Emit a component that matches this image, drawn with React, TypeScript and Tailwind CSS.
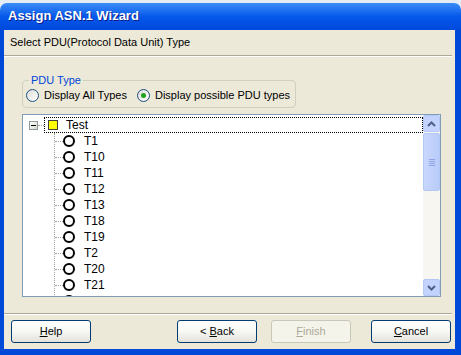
import { ReactNode } from 'react';

const font = { fontFamily: '"Liberation Sans", Arial, sans-serif' };

const items = ['T1', 'T10', 'T11', 'T12', 'T13', 'T18', 'T19', 'T2', 'T20', 'T21', 'T22'];

// XP push button
const XpButton = ({ children, disabled = false }: { children: ReactNode; disabled?: boolean }) => (
  <button
    className={`w-[80px] h-[23px] rounded-[3px] border text-[11px] flex items-center justify-center ${
      disabled
        ? 'border-[#c9c7ba] bg-[#f5f4ea] text-[#aca899]'
        : 'border-[#003c74] bg-gradient-to-b from-white via-[#f7f7f4] to-[#e3e2da] text-black'
    }`}
  >
    {children}
  </button>
);

const Radio = ({ checked, label }: { checked?: boolean; label: string }) => (
  <div className="flex items-center gap-[5px] whitespace-nowrap shrink-0">
    <div className="w-[13px] h-[13px] rounded-full border border-[#1c5180] bg-gradient-to-br from-[#dcdcd6] to-white flex items-center justify-center">
      {checked && <div className="w-[5px] h-[5px] rounded-full bg-[#21a121]" />}
    </div>
    <span>{label}</span>
  </div>
);

const ScrollArrow = ({ up }: { up?: boolean }) => (
  <div className="w-[17px] h-[17px] rounded-[2px] border border-[#b4c8f6] bg-[#c3d3fd] flex items-center justify-center">
    <svg width="9" height="6" viewBox="0 0 9 6">
      <path
        d={up ? 'M1 5 L4.5 1.5 L8 5' : 'M1 1 L4.5 4.5 L8 1'}
        stroke="#4d6185"
        strokeWidth="2"
        fill="none"
      />
    </svg>
  </div>
);

export default function App() {
  return (
    <div className="w-[461px] h-[355px] bg-[#e6ecf5] pt-[3px] flex flex-col text-black" style={font}>
      {/* Title bar */}
      <div className="h-[27px] rounded-t-[7px] bg-gradient-to-b from-[#3b8cf7] via-[#0558ea] to-[#0049dc] flex items-center pl-[8px] pb-[1px]">
        <span className="text-white font-bold text-[13px] [text-shadow:1px_1px_0_#0a1e8c]">Assign ASN.1 Wizard</span>
      </div>

      {/* Window frame + body */}
      <div className="flex-1 border-l-[4px] border-r-[6px] border-b-[6px] border-[#0048d8] bg-[#ece9d8] flex flex-col text-[11px]">
        <div className="h-[25px] pl-[6px] flex items-center">Select PDU(Protocol Data Unit) Type</div>
        <div className="mr-[3px] border-t border-[#aca899] border-b border-b-white" />

        {/* PDU type group */}
        <fieldset className="ml-[18px] mt-[17px] w-[274px] h-[34px] border border-[#d0d0bf] rounded-[4px] px-[3px] min-w-0">
          <legend className="ml-[3px] px-[2px] text-[#0046d5] leading-[13px]">PDU Type</legend>
          <div className="flex items-center gap-[10px]">
            <Radio label="Display All Types" />
            <Radio checked label="Display possible PDU types" />
          </div>
        </fieldset>

        {/* Tree */}
        <div className="ml-[18px] mt-[6px] w-[419px] h-[183px] border border-[#7f9db9] bg-white flex overflow-hidden">
          <div className="flex-1 pt-[2px] overflow-hidden">
            <div className="h-[16px] flex items-center">
              <div className="w-[6px]" />
              <div className="w-[9px] h-[9px] border border-[#919b9c] bg-gradient-to-br from-white to-[#d8d8cf] flex items-center justify-center">
                <div className="w-[5px] h-[1px] bg-black" />
              </div>
              <div className="w-[6px] border-t border-dotted border-[#a0a0a0]" />
              <div className="flex-1 h-[16px] border border-dotted border-black flex items-center pl-[3px]">
                <div className="w-[10px] h-[10px] border border-[#404040] bg-[#ffff00]" />
                <span className="ml-[8px] text-[12px]">Test</span>
              </div>
            </div>
            <div className="ml-[31px] border-l border-dotted border-[#a0a0a0] text-[12px]">
              {items.map((t) => (
                <div key={t} className="h-[16px] flex items-center">
                  <div className="w-[8px] border-t border-dotted border-[#a0a0a0]" />
                  <div className="w-[12px] h-[12px] rounded-full border-[2px] border-black" />
                  <span className="ml-[9px]">{t}</span>
                </div>
              ))}
            </div>
          </div>
          {/* Scrollbar */}
          <div className="w-[17px] bg-[#f7f6f1] flex flex-col">
            <ScrollArrow up />
            <div className="mt-[1px] h-[58px] rounded-[2px] border border-[#b4c8f6] bg-gradient-to-r from-[#c8d7fd] to-[#b9cbf9] flex flex-col items-center justify-center gap-[1px]">
              <div className="w-[6px] h-[1px] bg-[#8ea6e6]" />
              <div className="w-[6px] h-[1px] bg-[#8ea6e6]" />
              <div className="w-[6px] h-[1px] bg-[#8ea6e6]" />
              <div className="w-[6px] h-[1px] bg-[#8ea6e6]" />
            </div>
            <div className="flex-1" />
            <ScrollArrow />
          </div>
        </div>

        <div className="flex-1" />
        <div className="mr-[3px] border-t border-[#aca899] border-b border-b-white" />

        {/* Buttons */}
        <div className="h-[34px] flex items-center pl-[7px] pr-[4px] pb-[1px]">
          <XpButton><span><u>H</u>elp</span></XpButton>
          <div className="flex-1" />
          <XpButton><span>&lt; <u>B</u>ack</span></XpButton>
          <div className="w-[14px]" />
          <XpButton disabled><span><u>F</u>inish</span></XpButton>
          <div className="w-[20px]" />
          <XpButton><span><u>C</u>ancel</span></XpButton>
        </div>
      </div>
    </div>
  );
}
